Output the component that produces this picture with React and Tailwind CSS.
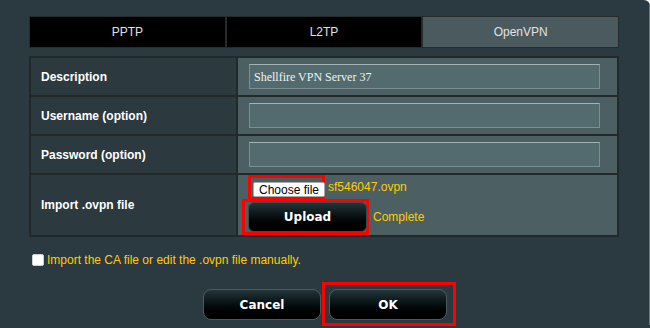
import React from 'react';

const tabs = ['PPTP', 'L2TP', 'OpenVPN'];

const rows = [
  { label: 'Description', value: 'Shellfire VPN Server 37' },
  { label: 'Username (option)', value: '' },
  { label: 'Password (option)', value: '' },
];

const App = () => {
  return (
    <div className="w-[650px] h-[328px] bg-[#2b3a40] rounded-tr-[6px] overflow-hidden pl-[29px] pr-[31px] pt-[16px] font-['Liberation_Sans',Arial,sans-serif] relative">
      <div className="absolute right-0 top-[5px] w-px h-[320px] bg-[#6d7c80]" />

      {/* tabs */}
      <div className="flex h-[32px] border border-[#262c2e]">
        {tabs.map((t, i) => (
          <div
            key={t}
            className={`flex-1 flex items-center justify-center text-[12px] text-[#e2e2e2] ${
              i === 2 ? 'bg-[#4b5a5e]' : 'bg-black'
            } ${i > 0 ? 'border-l-2 border-[#262c2e]' : ''}`}
          >
            {t}
          </div>
        ))}
      </div>

      {/* settings table */}
      <table className="mt-[8px] w-[590px] border-collapse">
        <tbody>
          {rows.map((r) => (
            <tr key={r.label} className="h-[39px]">
              <td className="w-[207px] bg-[#2c393e] border-2 border-[#22292b] pl-[10px] text-[12px] font-bold text-white">
                {r.label}
              </td>
              <td className="bg-[#4c5f63] border-2 border-[#22292b] pl-[11px]">
                <div className="w-[351px] h-[25px] bg-[#536b6f] border border-[#7b8f92] border-t-[#a3b3b5] flex items-center pl-[4px] font-['Liberation_Serif','Times_New_Roman',serif] text-[12px] text-[#eef2f2]">
                  {r.value}
                </div>
              </td>
            </tr>
          ))}
          <tr className="h-[61px]">
            <td className="w-[207px] bg-[#2c393e] border-2 border-[#22292b] pl-[10px] text-[12px] font-bold text-white">
              Import .ovpn file
            </td>
            <td className="bg-[#4c5f63] border-2 border-[#22292b] pl-[4px]">
              <div className="flex flex-col items-start">
                <div className="flex items-center">
                  <div className="ml-[6px] border-[3px] border-[#ff0000] pl-[2px] pt-[4px] w-[77px] h-[25px] -mb-[1px]">
                    <div className="h-[15px] w-[72px] bg-white rounded-[2px] border border-[#a9a9a9] flex items-center justify-center text-[12px] text-black leading-none">
                      Choose file
                    </div>
                  </div>
                  <span className="ml-[3px] text-[12px] text-[#ffcc00]">sf546047.ovpn</span>
                </div>
                <div className="flex items-center">
                  <div className="border-[3px] border-[#ff0000] w-[127px] h-[36px] pl-[3px]">
                    <div className="w-[119px] h-[30px] rounded-[6px] border border-[#3d4b4f] bg-gradient-to-b from-[#24353a] to-[#000000] flex items-center justify-center font-['DejaVu_Sans',Verdana,sans-serif] font-bold text-[12px] text-white">
                      Upload
                    </div>
                  </div>
                  <span className="ml-[4px] text-[12px] text-[#ffcc00]">Complete</span>
                </div>
              </div>
            </td>
          </tr>
        </tbody>
      </table>

      {/* checkbox */}
      <label className="mt-[14px] flex items-center text-[12px] text-[#ffcc00]">
        <span className="ml-[3px] w-[12px] h-[12px] bg-white rounded-[2px] border border-[#cfcfcf]" />
        <span className="ml-[3px]">Import the CA file or edit the .ovpn file manually.</span>
      </label>

      {/* buttons */}
      <div className="mt-[20px] flex justify-center gap-[8px] -ml-[29px] -mr-[31px]">
        <div className="w-[118px] h-[31px] rounded-[8px] border border-[#4a5a5e] bg-gradient-to-b from-[#24363b] to-[#000000] flex items-center justify-center font-['DejaVu_Sans',Verdana,sans-serif] font-bold text-[12px] text-white">
          Cancel
        </div>
        <div className="relative">
          <div className="absolute -left-[7px] -top-[7px] w-[134px] h-[44px] border-[3px] border-[#ff0000]" />
          <div className="w-[118px] h-[31px] rounded-[8px] border border-[#4a5a5e] bg-gradient-to-b from-[#24363b] to-[#000000] flex items-center justify-center font-['DejaVu_Sans',Verdana,sans-serif] font-bold text-[12px] text-white">
            OK
          </div>
        </div>
      </div>
    </div>
  );
};

export default App;
